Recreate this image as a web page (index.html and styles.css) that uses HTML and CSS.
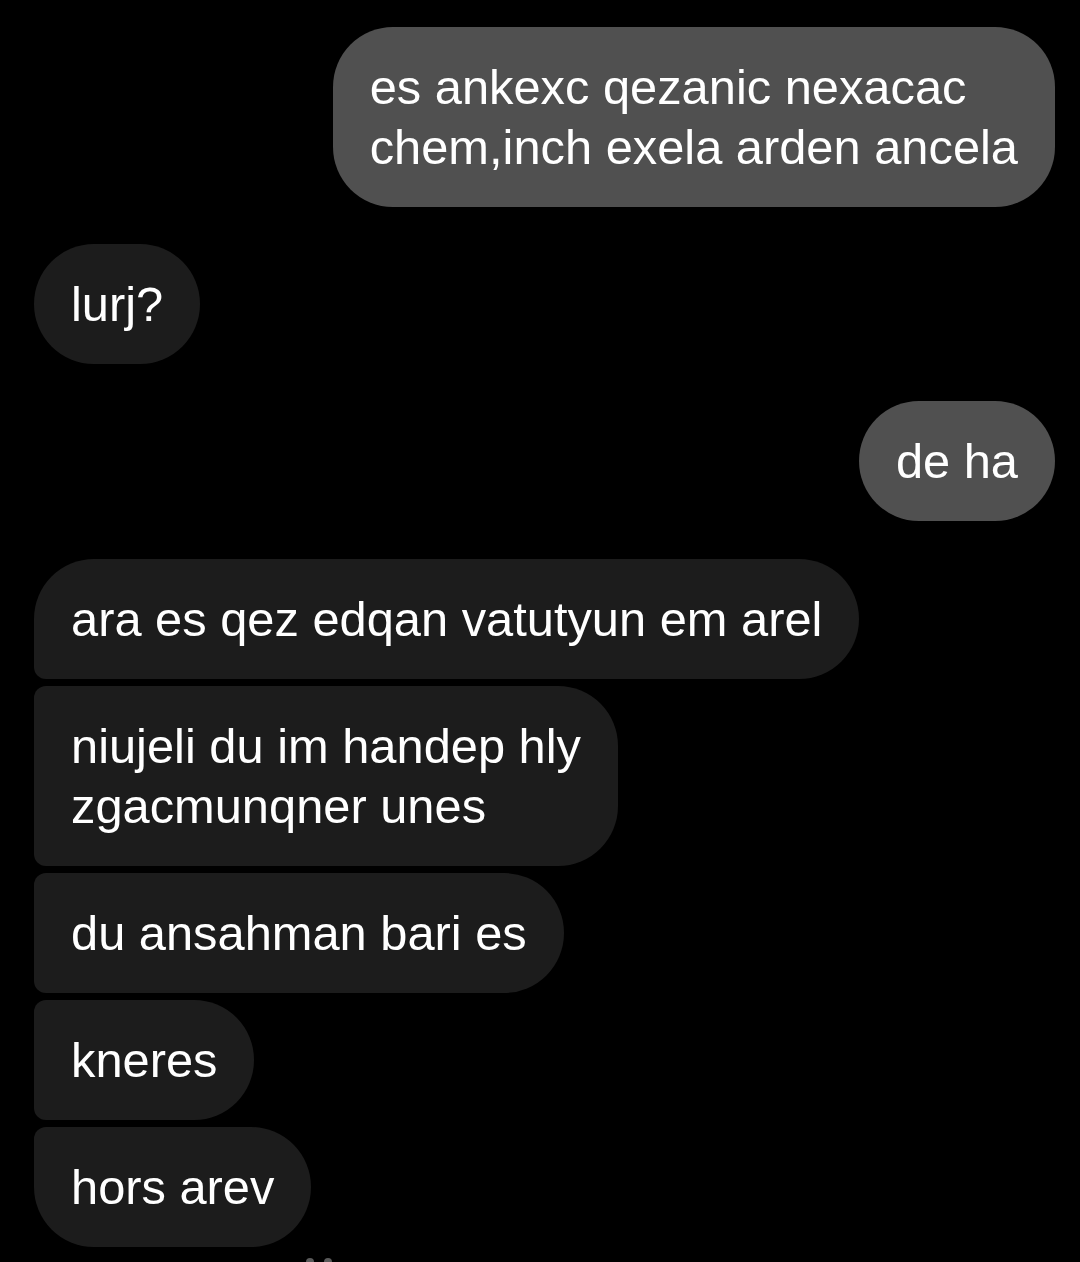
FILE: index.html
```html
<!DOCTYPE html>
<html>
<head>
<meta charset="utf-8">
<link rel="stylesheet" href="styles.css">
</head>
<body>
<div class="chat">
  <div class="msg sent first">es ankexc qezanic nexacac<br>chem,inch exela arden ancela</div>
  <div class="msg recv single">lurj?</div>
  <div class="msg sent">de ha</div>
  <div class="group">
    <div class="msg recv top">ara es qez edqan vatutyun em arel</div>
    <div class="msg recv mid">niujeli du im handep hly<br>zgacmunqner unes</div>
    <div class="msg recv mid">du ansahman bari es</div>
    <div class="msg recv mid">kneres</div>
    <div class="msg recv bottom">hors arev</div>
  </div>
  <div class="peek"><span class="dot"></span><span class="dot"></span></div>
</div>
</body>
</html>
```

FILE: styles.css
```css
html, body {
  margin: 0;
  padding: 0;
  background: #000;
}
body {
  width: 1080px;
  height: 1262px;
  overflow: hidden;
  font-family: "Liberation Sans", Arial, sans-serif;
}
.chat {
  display: flex;
  flex-direction: column;
  padding: 27px 25px 0 34px;
  gap: 37px;
}
.msg {
  font-size: 48.8px;
  line-height: 60px;
  color: #fff;
  padding: 30px 37px;
  border-radius: 60px;
  width: max-content;
  box-sizing: border-box;
}
.sent {
  background: #505050;
  align-self: flex-end;
}
.recv {
  background: #1c1c1c;
}
.group {
  display: flex;
  flex-direction: column;
  gap: 7px;
  margin-top: 1px;
}
.recv.top {
  border-bottom-left-radius: 12px;
}
.recv.mid {
  border-top-left-radius: 12px;
  border-bottom-left-radius: 12px;
}
.recv.bottom {
  border-top-left-radius: 12px;
}
.peek {
  display: flex;
  gap: 10px;
  margin-top: -26px;
  padding-left: 272px;
}
.dot {
  width: 8px;
  height: 8px;
  border-radius: 50%;
  background: #5a5a5a;
}
```
